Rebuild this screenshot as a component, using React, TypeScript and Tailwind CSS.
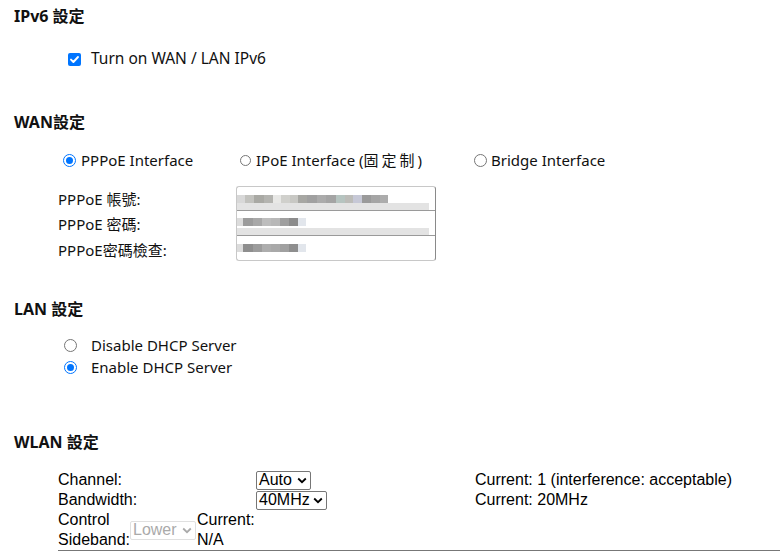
import React from "react";

const TOP = { fontFamily: '"Noto Sans", "Noto Sans CJK TC", sans-serif' };
const ARIAL = { fontFamily: '"Liberation Sans", "Noto Sans CJK TC", sans-serif' };

function Radio({ checked, small }: { checked?: boolean; small?: boolean }) {
  const size = small ? "w-[11px] h-[11px]" : "w-[13px] h-[13px]";
  if (checked) {
    return (
      <span className={`${size} rounded-full border border-[#0075ff] bg-white flex items-center justify-center shrink-0`}>
        <span className="w-[7px] h-[7px] rounded-full bg-[#0075ff]" />
      </span>
    );
  }
  return <span className={`${size} rounded-full border border-[#767676] bg-white shrink-0`} />;
}

function Checkbox() {
  return (
    <span className="w-[13px] h-[13px] rounded-[2px] bg-[#0075ff] flex items-center justify-center shrink-0">
      <svg width="11" height="11" viewBox="0 0 11 11">
        <path d="M2 5.6 L4.4 8 L9 3" stroke="white" strokeWidth="1.9" fill="none" strokeLinecap="round" strokeLinejoin="round" />
      </svg>
    </span>
  );
}

function Heading({ children }: { children: React.ReactNode }) {
  return (
    <div className="h-[22px] flex items-center text-[16px] font-bold text-[#111]" style={TOP}>
      {children}
    </div>
  );
}

function Chevron({ color = "#000" }: { color?: string }) {
  return (
    <svg width="10" height="7" viewBox="0 0 10 7" className="shrink-0">
      <path d="M1.2 1.5 L5 5.2 L8.8 1.5" stroke={color} strokeWidth="1.8" fill="none" />
    </svg>
  );
}

function Select({ label, w, disabled }: { label: string; w: string; disabled?: boolean }) {
  return (
    <div
      className={`${w} h-[19px] flex items-center justify-between pl-[2px] pr-[3px] rounded-[2px] border ${
        disabled ? "border-[#e0e0e0] text-[#aaa]" : "border-[#767676] text-black"
      } bg-white text-[16px] leading-none`}
      style={ARIAL}
    >
      <span>{label}</span>
      <Chevron color={disabled ? "#aaa" : "#000"} />
    </div>
  );
}

function Blur({ widths }: { widths: [number, string][] }) {
  return (
    <div className="flex">
      {widths.map(([w, c], i) => (
        <div key={i} style={{ width: w, background: c }} className="h-[8px]" />
      ))}
    </div>
  );
}

export default function App() {
  const row1: [number, string][] = [
    [8, "#d8d8d8"], [9, "#c2c2be"], [10, "#a9a9a4"], [9, "#b4b4b0"], [8, "#e8e8e6"], [9, "#d0d0cc"], [8, "#c8c8c4"],
    [9, "#a7a7a3"], [10, "#a0a0a0"], [9, "#ababab"], [10, "#a4a4a4"], [9, "#b6c4c0"], [8, "#bcbcb8"], [9, "#c6c8d6"],
    [9, "#9a9a9a"], [9, "#a5a5a5"], [8, "#acacac"],
  ];
  const row2: [number, string][] = [
    [6, "#dcdcdc"], [10, "#9c9c9c"], [9, "#a8a8a8"], [9, "#bdbdbd"], [9, "#b8b8b8"], [9, "#9f9f9f"], [9, "#8c8c8c"], [8, "#e2e6ec"],
  ];
  const row3: [number, string][] = [
    [6, "#dcdcdc"], [10, "#8e8e8e"], [9, "#9c9c9c"], [9, "#adadad"], [9, "#a9a9a9"], [9, "#a0a0a0"], [9, "#8e8e8e"], [8, "#e2e6ec"],
  ];

  return (
    <div className="w-[780px] h-[551px] overflow-hidden bg-white text-[#111] pl-[14px] pt-[5px]" style={TOP}>
      <Heading>
        <span>IPv6 設定</span>
      </Heading>

      <div className="mt-[21px] h-[22px] flex items-center pl-[54px] text-[15.5px]">
        <Checkbox />
        <span className="ml-[10px]">Turn on WAN / LAN IPv6</span>
      </div>

      <div className="mt-[41px]">
        <Heading>WAN設定</Heading>
      </div>

      <div className="mt-[16px] h-[22px] flex items-center text-[15px]">
        <div className="w-[226px] flex items-center pl-[49px]">
          <Radio checked />
          <span className="ml-[5px]">PPPoE Interface</span>
        </div>
        <div className="w-[234px] flex items-center">
          <Radio small />
          <span className="ml-[5px]">
            IPoE Interface (<span className="tracking-[3px]">固定制</span>)
          </span>
        </div>
        <div className="flex items-center">
          <Radio />
          <span className="ml-[4px]">Bridge Interface</span>
        </div>
      </div>

      <div className="mt-[15px] flex pl-[44px]">
        <div className="w-[178px] flex flex-col text-[15px]">
          <div className="h-[25px] flex items-center pt-[2px]">PPPoE 帳號:</div>
          <div className="h-[25px] flex items-center pt-[1px]">PPPoE 密碼:</div>
          <div className="h-[25px] flex items-center pt-[3px]">PPPoE密碼檢查:</div>
        </div>
        <div className="w-[200px] h-[75px] rounded-[3px] border border-[#c8c8c8] border-r-[#8a8a8a] flex flex-col overflow-hidden">
          <div className="h-[25px] flex flex-col justify-end border-b border-[#9a9a9a]">
            <Blur widths={row1} />
            <div className="h-[7px] bg-[#e3e3e3] mr-[6px]" />
          </div>
          <div className="h-[25px] flex flex-col justify-end border-b border-[#9a9a9a]">
            <Blur widths={row2} />
            <div className="h-[7px] bg-[#e3e3e3] mr-[6px] mt-[2px]" />
          </div>
          <div className="h-[25px] flex flex-col justify-center">
            <Blur widths={row3} />
          </div>
        </div>
      </div>

      <div className="mt-[37px]">
        <Heading>LAN 設定</Heading>
      </div>

      <div className="mt-[14px] pl-[50px] text-[15px]">
        <div className="h-[22px] flex items-center">
          <Radio />
          <span className="ml-[14px]">Disable DHCP Server</span>
        </div>
        <div className="h-[22px] flex items-center">
          <Radio checked />
          <span className="ml-[14px]">Enable DHCP Server</span>
        </div>
      </div>

      <div className="mt-[53px]">
        <Heading>WLAN 設定</Heading>
      </div>

      <div className="mt-[17px] pl-[44px] text-[16px] text-black leading-[20px]" style={ARIAL}>
        <div className="h-[20px] flex items-center">
          <div className="w-[198px]">Channel:</div>
          <div className="w-[219px]">
            <Select label="Auto" w="w-[55px]" />
          </div>
          <div>Current: 1 (interference: acceptable)</div>
        </div>
        <div className="h-[20px] flex items-center">
          <div className="w-[198px]">Bandwidth:</div>
          <div className="w-[219px]">
            <Select label="40MHz" w="w-[71px]" />
          </div>
          <div>Current: 20MHz</div>
        </div>
        <div className="h-[40px] flex items-center">
          <div className="w-[72px]">
            <div>Control</div>
            <div>Sideband:</div>
          </div>
          <Select label="Lower" w="w-[66px]" disabled />
          <div className="ml-[1px]">
            <div>Current:</div>
            <div>N/A</div>
          </div>
        </div>
        <div className="flex h-[6px] border-t-2 border-[#777]">
          <div className="w-[40px] border-r border-[#999]" />
          <div className="w-[301px] border-r border-[#999]" />
          <div className="w-[299px] border-r border-[#999]" />
        </div>
      </div>
    </div>
  );
}
